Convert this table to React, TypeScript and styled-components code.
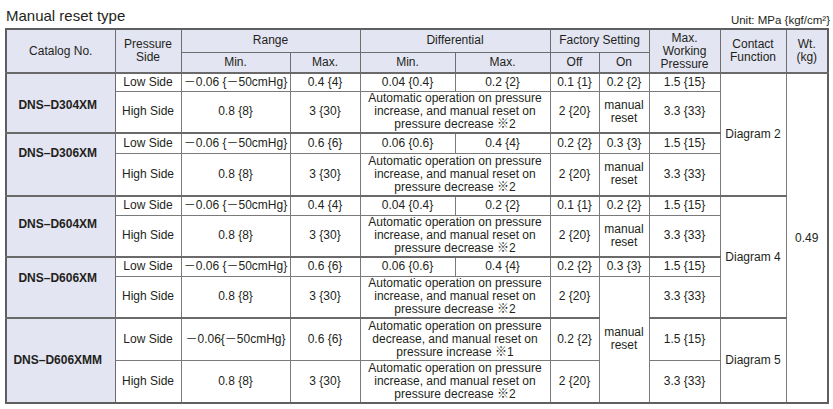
import React from "react";
import styled, { createGlobalStyle, css } from "styled-components";

const Global = createGlobalStyle`
  html, body { margin: 0; padding: 0; background: #fff; }
  body { font-family: "Liberation Sans", Arial, "Noto Sans CJK JP", sans-serif; color: #231f20; }
`;

const Page = styled.div`
  width: 833px;
  padding-left: 5px;
  box-sizing: border-box;
`;

const TitleBar = styled.div`
  height: 28px;
  width: 825px;
  display: flex;
  justify-content: space-between;
  align-items: flex-end;
  box-sizing: border-box;
  padding-bottom: 2px;
`;

const Title = styled.div`
  font-size: 15px;
  line-height: 18px;
  padding-left: 1px;
  margin-bottom: 1px;
`;

const Unit = styled.div`
  font-size: 11.5px;
  line-height: 12px;
`;

const Table = styled.table`
  width: 822px;
  table-layout: fixed;
  border-collapse: collapse;
  border: 2px solid #5f5f5f;
  font-size: 12px;
  line-height: 13px;
`;

const HeadRow = styled.tr<{ $h: number }>`
  height: ${(p) => p.$h}px;
`;

const HeadCell = styled.th`
  background: #e3e5f2;
  font-weight: normal;
  text-align: center;
  vertical-align: middle;
  padding: 0;
  border: 1px solid #6e6e6e;
  line-height: 13px;
`;

const BodyRow = styled.tr<{ $h: number; $group?: boolean }>`
  height: ${(p) => p.$h}px;
  ${(p) =>
    p.$group &&
    css`
      & > td {
        border-top: 2px solid #6a6a6a;
      }
    `}
`;

const Cell = styled.td`
  text-align: center;
  vertical-align: middle;
  padding: 0 2px;
  border: 1px solid #7a7a7a;
  white-space: nowrap;
`;

const NoteCell = styled(Cell)`
  padding: 0 1px;
  line-height: 13px;
`;

const CatalogCell = styled.td<{ $shift: number }>`
  background: #e3e5f2;
  font-weight: bold;
  text-align: center;
  vertical-align: middle;
  white-space: nowrap;
  border: 1px solid #6a6a6a;
  padding: ${(p) => (p.$shift > 0 ? `${p.$shift * 2}px 6px 0 0` : `0 6px ${-p.$shift * 2}px 0`)};
`;

const M = "－";

const IncDec = () => (
  <>
    Automatic operation on pressure
    <br />
    increase, and manual reset on
    <br />
    pressure decrease ※2
  </>
);

const DecInc = () => (
  <>
    Automatic operation on pressure
    <br />
    decrease, and manual reset on
    <br />
    pressure increase ※1
  </>
);

const ManualReset = () => (
  <>
    manual
    <br />
    reset
  </>
);

export default function App() {
  return (
    <>
      <Global />
      <Page>
        <TitleBar>
          <Title>Manual reset type</Title>
          <Unit>Unit: MPa {"{"}kgf/cm²{"}"}</Unit>
        </TitleBar>
        <Table>
          <colgroup>
            <col style={{ width: 109 }} />
            <col style={{ width: 66 }} />
            <col style={{ width: 109 }} />
            <col style={{ width: 70 }} />
            <col style={{ width: 95 }} />
            <col style={{ width: 95 }} />
            <col style={{ width: 49 }} />
            <col style={{ width: 50 }} />
            <col style={{ width: 71 }} />
            <col style={{ width: 66 }} />
            <col style={{ width: 42 }} />
          </colgroup>
          <thead>
            <HeadRow $h={23}>
              <HeadCell rowSpan={2}>Catalog No.</HeadCell>
              <HeadCell rowSpan={2}>
                Pressure
                <br />
                Side
              </HeadCell>
              <HeadCell colSpan={2}>Range</HeadCell>
              <HeadCell colSpan={2}>Differential</HeadCell>
              <HeadCell colSpan={2}>Factory Setting</HeadCell>
              <HeadCell rowSpan={2}>
                Max.
                <br />
                Working
                <br />
                Pressure
              </HeadCell>
              <HeadCell rowSpan={2}>
                Contact
                <br />
                Function
              </HeadCell>
              <HeadCell rowSpan={2}>
                Wt.
                <br />
                (kg)
              </HeadCell>
            </HeadRow>
            <HeadRow $h={21}>
              <HeadCell>Min.</HeadCell>
              <HeadCell>Max.</HeadCell>
              <HeadCell>Min.</HeadCell>
              <HeadCell>Max.</HeadCell>
              <HeadCell>Off</HeadCell>
              <HeadCell>On</HeadCell>
            </HeadRow>
          </thead>
          <tbody>
            <BodyRow $h={18} $group>
              <CatalogCell rowSpan={2} $shift={2}>DNS–D304XM</CatalogCell>
              <Cell>Low Side</Cell>
              <Cell>{M}0.06 {"{"}{M}50cmHg{"}"}</Cell>
              <Cell>0.4 {"{4}"}</Cell>
              <Cell>0.04 {"{0.4}"}</Cell>
              <Cell>0.2 {"{2}"}</Cell>
              <Cell>0.1 {"{1}"}</Cell>
              <Cell>0.2 {"{2}"}</Cell>
              <Cell>1.5 {"{15}"}</Cell>
              <Cell rowSpan={4}>Diagram 2</Cell>
              <Cell rowSpan={10}>0.49</Cell>
            </BodyRow>
            <BodyRow $h={42}>
              <Cell>High Side</Cell>
              <Cell>0.8 {"{8}"}</Cell>
              <Cell>3 {"{30}"}</Cell>
              <NoteCell colSpan={2}><IncDec /></NoteCell>
              <Cell>2 {"{20}"}</Cell>
              <Cell><ManualReset /></Cell>
              <Cell>3.3 {"{33}"}</Cell>
            </BodyRow>
            <BodyRow $h={20} $group>
              <CatalogCell rowSpan={2} $shift={-11}>DNS–D306XM</CatalogCell>
              <Cell>Low Side</Cell>
              <Cell>{M}0.06 {"{"}{M}50cmHg{"}"}</Cell>
              <Cell>0.6 {"{6}"}</Cell>
              <Cell>0.06 {"{0.6}"}</Cell>
              <Cell>0.4 {"{4}"}</Cell>
              <Cell>0.2 {"{2}"}</Cell>
              <Cell>0.3 {"{3}"}</Cell>
              <Cell>1.5 {"{15}"}</Cell>
            </BodyRow>
            <BodyRow $h={43}>
              <Cell>High Side</Cell>
              <Cell>0.8 {"{8}"}</Cell>
              <Cell>3 {"{30}"}</Cell>
              <NoteCell colSpan={2}><IncDec /></NoteCell>
              <Cell>2 {"{20}"}</Cell>
              <Cell><ManualReset /></Cell>
              <Cell>3.3 {"{33}"}</Cell>
            </BodyRow>
            <BodyRow $h={19} $group>
              <CatalogCell rowSpan={2} $shift={-2}>DNS–D604XM</CatalogCell>
              <Cell>Low Side</Cell>
              <Cell>{M}0.06 {"{"}{M}50cmHg{"}"}</Cell>
              <Cell>0.4 {"{4}"}</Cell>
              <Cell>0.04 {"{0.4}"}</Cell>
              <Cell>0.2 {"{2}"}</Cell>
              <Cell>0.1 {"{1}"}</Cell>
              <Cell>0.2 {"{2}"}</Cell>
              <Cell>1.5 {"{15}"}</Cell>
              <Cell rowSpan={4}>Diagram 4</Cell>
            </BodyRow>
            <BodyRow $h={42}>
              <Cell>High Side</Cell>
              <Cell>0.8 {"{8}"}</Cell>
              <Cell>3 {"{30}"}</Cell>
              <NoteCell colSpan={2}><IncDec /></NoteCell>
              <Cell>2 {"{20}"}</Cell>
              <Cell><ManualReset /></Cell>
              <Cell>3.3 {"{33}"}</Cell>
            </BodyRow>
            <BodyRow $h={19} $group>
              <CatalogCell rowSpan={2} $shift={-9}>DNS–D606XM</CatalogCell>
              <Cell>Low Side</Cell>
              <Cell>{M}0.06 {"{"}{M}50cmHg{"}"}</Cell>
              <Cell>0.6 {"{6}"}</Cell>
              <Cell>0.06 {"{0.6}"}</Cell>
              <Cell>0.4 {"{4}"}</Cell>
              <Cell>0.2 {"{2}"}</Cell>
              <Cell>0.3 {"{3}"}</Cell>
              <Cell>1.5 {"{15}"}</Cell>
            </BodyRow>
            <BodyRow $h={42}>
              <Cell>High Side</Cell>
              <Cell>0.8 {"{8}"}</Cell>
              <Cell>3 {"{30}"}</Cell>
              <NoteCell colSpan={2}><IncDec /></NoteCell>
              <Cell>2 {"{20}"}</Cell>
              <Cell rowSpan={3}><ManualReset /></Cell>
              <Cell>3.3 {"{33}"}</Cell>
            </BodyRow>
            <BodyRow $h={42} $group>
              <CatalogCell rowSpan={2} $shift={0}>DNS–D606XMM</CatalogCell>
              <Cell>Low Side</Cell>
              <Cell>{M}0.06{"{"}{M}50cmHg{"}"}</Cell>
              <Cell>0.6 {"{6}"}</Cell>
              <NoteCell colSpan={2}><DecInc /></NoteCell>
              <Cell>0.2 {"{2}"}</Cell>
              <Cell>1.5 {"{15}"}</Cell>
              <Cell rowSpan={2}>Diagram 5</Cell>
            </BodyRow>
            <BodyRow $h={43}>
              <Cell>High Side</Cell>
              <Cell>0.8 {"{8}"}</Cell>
              <Cell>3 {"{30}"}</Cell>
              <NoteCell colSpan={2}><IncDec /></NoteCell>
              <Cell>2 {"{20}"}</Cell>
              <Cell>3.3 {"{33}"}</Cell>
            </BodyRow>
          </tbody>
        </Table>
      </Page>
    </>
  );
}
